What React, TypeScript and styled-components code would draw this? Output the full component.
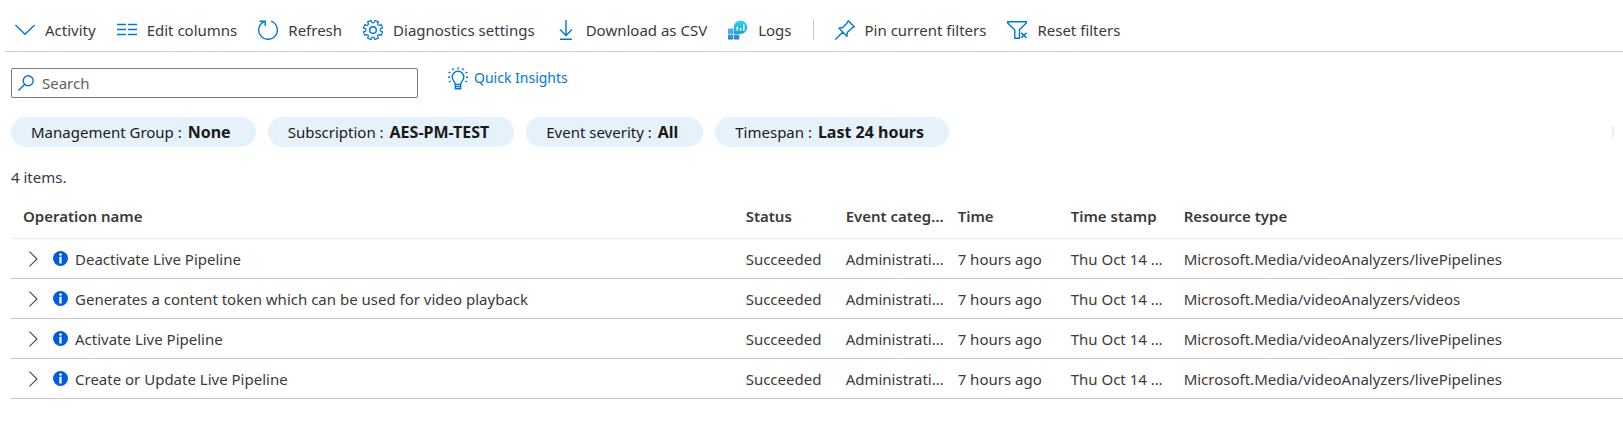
import React from 'react';
import styled, { createGlobalStyle } from 'styled-components';

const BLUE = '#0078d4';

const GlobalStyle = createGlobalStyle`
  *, *::before, *::after { box-sizing: border-box; }
  body {
    margin: 0;
    background: #fff;
    color: #3b3a39;
    font-family: 'Segoe UI', 'Noto Sans', 'Open Sans', sans-serif;
    font-size: 15px;
    line-height: 20px;
  }
  button, input { font: inherit; color: inherit; }
`;

const Toolbar = styled.div`
  display: flex;
  align-items: center;
  gap: 21px;
  height: 52px;
  margin-left: 5px;
  padding: 8px 10px 0;
  border-bottom: 1px solid #d2d0ce;
`;

const ToolButton = styled.button`
  display: flex;
  align-items: center;
  gap: 10px;
  padding: 0;
  border: 0;
  background: none;
  white-space: nowrap;
  cursor: pointer;
`;

const Divider = styled.span`
  width: 1px;
  height: 21px;
  background: #c8c6c4;
`;

const Icon = styled.svg<{ $size?: number }>`
  flex: none;
  width: ${({ $size = 20 }) => $size}px;
  height: ${({ $size = 20 }) => $size}px;
  fill: none;
  stroke: ${BLUE};
  stroke-width: 1.4;
`;

const Content = styled.main`
  padding: 16px 0 0 11px;
`;

const SearchRow = styled.div`
  display: flex;
  align-items: flex-start;
  gap: 30px;
`;

const SearchBox = styled.label`
  display: flex;
  align-items: center;
  gap: 8px;
  width: 407px;
  height: 30px;
  padding: 0 6px;
  border: 1px solid #7a7876;
  border-radius: 2px;
`;

const SearchInput = styled.input`
  flex: 1;
  min-width: 0;
  padding: 0;
  border: 0;
  outline: 0;
  background: none;
  &::placeholder { color: #605e5c; opacity: 1; }
`;

const InsightsLink = styled.a`
  display: flex;
  align-items: center;
  gap: 6px;
  color: ${BLUE};
  font-size: 14px;
  text-decoration: none;
`;

const Filters = styled.div`
  display: flex;
  align-items: center;
  gap: 12px;
  margin-top: 19px;
  padding-right: 9px;
`;

const Pill = styled.button`
  height: 30px;
  padding: 0 25px 0 20px;
  border: 0;
  border-radius: 15px;
  background: #e5f1fb;
  color: #1b1a19;
  white-space: nowrap;
  cursor: pointer;
`;

const PillValue = styled.b`
  margin-left: 2px;
  font-size: 16px;
`;

const PillEdge = styled.span`
  width: 2px;
  height: 14px;
  margin-left: auto;
  border-radius: 0 2px 2px 0;
  background: #e5f1fb;
`;

const Count = styled.p`
  margin: 20px 0 9px;
`;

const Table = styled.table`
  width: 100%;
  table-layout: fixed;
  border-collapse: separate;
  border-spacing: 0;
`;

const Col = styled.col<{ $width?: string }>`
  width: ${({ $width = 'auto' }) => $width};
`;

const HeadCell = styled.th`
  height: 43px;
  padding: 0 2px 2px 12px;
  border-bottom: 1px solid #edebe9;
  font-weight: 600;
  text-align: left;
  white-space: nowrap;
  overflow: hidden;
  text-overflow: ellipsis;
`;

const Cell = styled.td`
  height: 40px;
  padding: 0 2px 0 12px;
  border-bottom: 1px solid #c8c6c4;
  white-space: nowrap;
  overflow: hidden;
  text-overflow: ellipsis;
`;

const Operation = styled.div`
  display: flex;
  align-items: center;
  gap: 7px;
`;

const Expand = styled.button`
  display: flex;
  width: 23px;
  padding: 0 0 0 2px;
  border: 0;
  background: none;
  cursor: pointer;
`;

const ChevronDown = () => (
  <Icon viewBox="0 0 20 20"><path d="M0.5 5 10 14.2 19.500 5" /></Icon>
);
const Columns = () => (
  <Icon viewBox="0 0 20 20"><path d="M0 4.500h9M0 9.500h9M0 14.500h9M11 4.500h9M11 9.500h9M11 14.500h9" /></Icon>
);
const Refresh = () => (
  <Icon viewBox="0 0 20 20"><path d="M13 1.200A9.300 9.300 0 1 1 6.800 1.300M1.500 1.200H7.200V6" /></Icon>
);

const gearPath = (() => {
  const pts: string[] = [];
  const teeth = 8;
  for (let i = 0; i < teeth; i++) {
    const base = (i * 2 * Math.PI) / teeth - Math.PI / 2 + Math.PI / 8;
    const at = (r: number, a: number) =>
      `${(10 + r * Math.cos(base + a)).toFixed(2)} ${(10 + r * Math.sin(base + a)).toFixed(2)}`;
    pts.push(`${i ? 'L' : 'M'}${at(9.8, -0.2)}L${at(9.8, 0.2)}L${at(8, 0.22)}Q${at(6.4, 0.39)} ${at(8, 0.56)}`);
  }
  return pts.join('') + 'Z';
})();
const Gear = () => (
  <Icon viewBox="0 0 20 20"><path d={gearPath} strokeWidth="1.2" strokeLinejoin="round" /><circle cx="10" cy="10" r="3.300" /></Icon>
);
const Download = () => (
  <Icon viewBox="0 0 20 20"><path d="M10 0v15.500M4 9.500l6 6 6-6M4 19.300h12" /></Icon>
);
const Logs = () => (
  <Icon viewBox="0 0 20 20">
    <defs>
      <linearGradient id="logsBubble" x1="0" y1="0" x2="0" y2="1">
        <stop offset="0" stopColor="#32d0f0" />
        <stop offset="1" stopColor="#1fa5cc" />
      </linearGradient>
      <linearGradient id="logsTiles" x1="0" y1="0" x2="0" y2="1">
        <stop offset="0" stopColor="#5eb2f5" />
        <stop offset="1" stopColor="#1a82dc" />
      </linearGradient>
    </defs>
    <g stroke="none">
      <path fill="url(#logsTiles)" d="M0 8.500h5.300v5.300H0zM0 14.500h5.300v5H0zM6 14.500h5.300v5H6zM6 8.500h5.300v5.300H6z" />
      <path fill="url(#logsBubble)" d="M12.500.5a6.700 6.700 0 1 1 0 13.400H5.800V7.200A6.700 6.700 0 0 1 12.500.5z" />
      <path fill="#fff" d="M8.600 6.500H10v4.300H8.600zM11.800 8h1.500v2.800h-1.500zM15 4.500h1.500v6.300H15z" />
    </g>
  </Icon>
);
const Pin = () => (
  <Icon viewBox="0 0 20 20">
    <path strokeLinejoin="round" d="M13.200.8 19.200 6.800 17 7.900 12.500 12.300 11.900 16.200 3.800 8.100 7.700 7.500 12.100 3zM7.700 12.200.3 19.600" />
  </Icon>
);
const FilterReset = () => (
  <Icon viewBox="0 0 20 20">
    <path d="M13 18.300H7.800V10L.7 3V1.800h18.600V3L12.500 9.800V18" />
    <path strokeWidth="1.6" d="M14.200 12.700l5.300 5.300M19.500 12.700 14.200 18" />
  </Icon>
);
const Magnifier = () => (
  <Icon $size={16} viewBox="0 0 16 16"><circle cx="10.200" cy="5.800" r="5" /><path d="M6.600 9.400.4 15.600" /></Icon>
);
const Bulb = () => (
  <Icon viewBox="0 0 20 20" overflow="visible">
    <path d="M7.300 16.500C7.300 13.500 4.200 12.500 4.200 9a5.800 5.800 0 0 1 11.600 0c0 3.500-3.100 4.500-3.100 7.500zM7.300 16.500v4.200h5.400v-4.200M7.500 18.600h5" />
    <path d="M10 1.500V-.8M5.500 2.300 4.600.3M14.500 2.300 15.400.3M2.400 5.200.5 4M17.600 5.200l1.900-1.200M2 9.200H0M18 9.200h2M2.700 13l-1.900 1M17.300 13l1.900 1" />
  </Icon>
);
const ChevronRight = () => (
  <Icon $size={16} viewBox="0 0 16 16"><path stroke="#484644" strokeWidth="1.100" d="M4.500.7 12 8 4.500 15.300" /></Icon>
);
const Info = () => (
  <Icon $size={15} viewBox="0 0 15 15">
    <g stroke="none">
      <circle cx="7.500" cy="7.500" r="7.500" fill="#015cda" />
      <circle cx="7.500" cy="3.500" r="1.300" fill="#fff" />
      <path fill="#fff" d="M6.400 5.700h2.200v6.800H6.400z" />
    </g>
  </Icon>
);

const commands = [
  { label: 'Activity', icon: <ChevronDown /> },
  { label: 'Edit columns', icon: <Columns /> },
  { label: 'Refresh', icon: <Refresh /> },
  { label: 'Diagnostics settings', icon: <Gear /> },
  { label: 'Download as CSV', icon: <Download /> },
  { label: 'Logs', icon: <Logs /> },
];
const filterCommands = [
  { label: 'Pin current filters', icon: <Pin /> },
  { label: 'Reset filters', icon: <FilterReset /> },
];

const filters = [
  ['Management Group', 'None'],
  ['Subscription', 'AES-PM-TEST'],
  ['Event severity', 'All'],
  ['Timespan', 'Last 24 hours'],
];

const headings = ['Operation name', 'Status', 'Event category', 'Time', 'Time stamp', 'Resource type'];

const rows = [
  ['Deactivate Live Pipeline', 'Microsoft.Media/videoAnalyzers/livePipelines'],
  ['Generates a content token which can be used for video playback', 'Microsoft.Media/videoAnalyzers/videos'],
  ['Activate Live Pipeline', 'Microsoft.Media/videoAnalyzers/livePipelines'],
  ['Create or Update Live Pipeline', 'Microsoft.Media/videoAnalyzers/livePipelines'],
];

export default function App() {
  return (
    <>
      <GlobalStyle />
      <Toolbar role="toolbar">
        {commands.map(({ label, icon }) => (
          <ToolButton key={label} type="button">{icon}{label}</ToolButton>
        ))}
        <Divider />
        {filterCommands.map(({ label, icon }) => (
          <ToolButton key={label} type="button">{icon}{label}</ToolButton>
        ))}
      </Toolbar>
      <Content>
        <SearchRow>
          <SearchBox>
            <Magnifier />
            <SearchInput type="text" placeholder="Search" aria-label="Search" />
          </SearchBox>
          <InsightsLink href="#insights"><Bulb />Quick Insights</InsightsLink>
        </SearchRow>
        <Filters>
          {filters.map(([name, value]) => (
            <Pill key={name} type="button">{name} : <PillValue>{value}</PillValue></Pill>
          ))}
          <PillEdge />
        </Filters>
        <Count>4 items.</Count>
        <Table>
          <colgroup>
            <Col />
            <Col $width="100px" />
            <Col $width="112px" />
            <Col $width="113px" />
            <Col $width="113px" />
            <Col $width="28%" />
          </colgroup>
          <thead>
            <tr>{headings.map((h) => <HeadCell key={h} scope="col">{h}</HeadCell>)}</tr>
          </thead>
          <tbody>
            {rows.map(([operation, resource]) => (
              <tr key={operation}>
                <Cell>
                  <Operation>
                    <Expand type="button" aria-label={`Expand ${operation}`}><ChevronRight /></Expand>
                    <Info />
                    {operation}
                  </Operation>
                </Cell>
                <Cell>Succeeded</Cell>
                <Cell>Administrative</Cell>
                <Cell>7 hours ago</Cell>
                <Cell>Thu Oct 14 2021</Cell>
                <Cell>{resource}</Cell>
              </tr>
            ))}
          </tbody>
        </Table>
      </Content>
    </>
  );
}
